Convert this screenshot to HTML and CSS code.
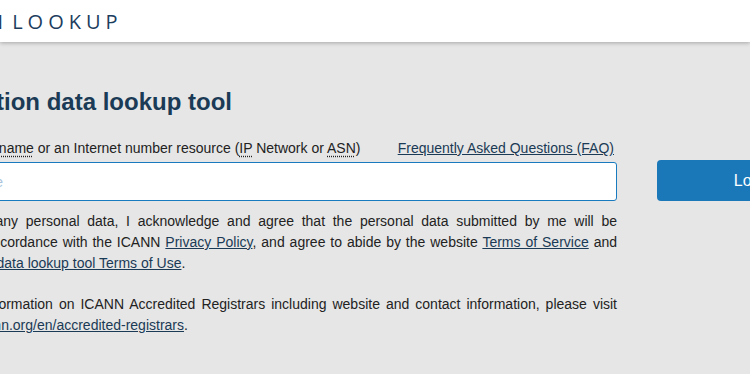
FILE: index.html
```html
<!DOCTYPE html>
<html>
<head>
    <title>ICANN Lookup</title>
<link rel="stylesheet" href="styles.css">
</head>
<body>
    <div class="topbar">
        <span class="brand">ICANN LOOKUP</span>
    </div>

    <div class="page">
        <h1 class="title">Registration data lookup tool</h1>

        <div class="lookupRow">
            <div class="formCol">
                <div class="labelRow">
                    <label for="query">Enter a domain <abbr title="Domain Name">name</abbr> or an Internet number resource (<abbr title="Internet Protocol">IP</abbr> Network or <abbr title="Autonomous System Number">ASN</abbr>)</label>
                    <a href="#" class="faq">Frequently Asked Questions (FAQ)</a>
                </div>
                <input type="text" id="query" class="queryInput" placeholder="Domain name">

                <p class="notice">By submitting any personal data, I acknowledge and agree that the personal data submitted by me will be processed in accordance with the ICANN <a href="#">Privacy Policy</a>, and agree to abide by the website <a href="#">Terms of Service</a> and the <a href="#">registration data lookup tool Terms of Use</a>.</p>

                <p class="notice">For updated information on ICANN Accredited Registrars including website and contact information, please visit <a href="#">https://www.icann.org/en/accredited-registrars</a>.</p>
            </div>

            <div class="sideCol">
                <button class="lookupButton">Lookup</button>
            </div>
        </div>
    </div>
</body>
</html>
```

FILE: styles.css
```css
body {
	margin: 0;
	background-color: #E6E6E6;
	font-family: "Liberation Sans", Arial, sans-serif;
	color: #222222;
	overflow: hidden;
}

.topbar {
	height: 42px;
	background-color: #FFFFFF;
	box-shadow: 0 1px 4px rgba(0, 0, 0, 0.28);
	display: flex;
	align-items: center;
}

.brand {
	margin-left: -78px;
	font-family: "Open Sans", sans-serif;
	font-size: 20px;
	letter-spacing: 5px;
	word-spacing: -6px;
	color: #1C3D5E;
	white-space: nowrap;
}

.page {
	margin-left: -100px;
	width: 963px;
	padding-top: 46px;
}

.title {
	margin: 0;
	font-size: 24px;
	line-height: 28px;
	font-weight: bold;
	color: #1A3A55;
}

.lookupRow {
	display: flex;
	gap: 40px;
	margin-top: 22px;
}

.formCol {
	width: 717px;
}

.sideCol {
	width: 206px;
	padding-top: 22px;
}

.labelRow {
	display: flex;
	justify-content: space-between;
	font-size: 14px;
	line-height: 20px;
	padding-right: 3px;
	white-space: nowrap;
}

abbr {
	text-decoration: underline dotted;
	text-underline-offset: 3px;
}

a {
	color: #1A3A55;
	text-decoration: underline;
}

.queryInput {
	display: block;
	box-sizing: border-box;
	width: 100%;
	height: 39px;
	margin-top: 4px;
	padding: 0 15px;
	border: 1px solid #1A7ABF;
	border-radius: 3px;
	background-color: #FFFFFF;
	font-family: "Liberation Sans", Arial, sans-serif;
	font-size: 14px;
}

.queryInput::placeholder {
	color: #AAC4DC;
}

.notice {
	margin: 20px 0 0 0;
	font-size: 14px;
	line-height: 21px;
	text-align: justify;
}

.queryInput + .notice {
	margin-top: 10px;
}

.lookupButton {
	width: 206px;
	height: 41px;
	border: none;
	border-radius: 4px;
	background-color: #1A77B8;
	color: #FFFFFF;
	font-family: "Liberation Sans", Arial, sans-serif;
	font-size: 16px;
}
```
